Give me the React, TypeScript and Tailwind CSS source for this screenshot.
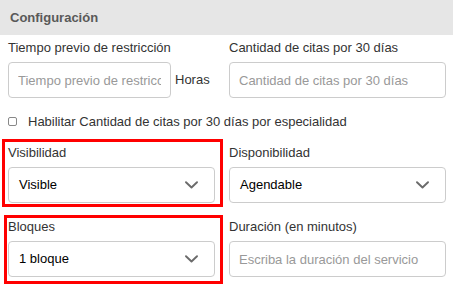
function Field({label, children}: {label: string; children: React.ReactNode}) {
    return (
        <div className="flex flex-col">
            <label className="h-[27px] pt-[5px] text-[13px] leading-[16px] text-[#333]">{label}</label>
            {children}
        </div>
    );
}

function Chevron() {
    return (
        <svg width="13" height="8" viewBox="0 0 13 8" fill="none">
            <path d="M1 1.2 6.5 6.5 12 1.2" stroke="#6b6b6b" strokeWidth="1.9" strokeLinecap="round" strokeLinejoin="round" />
        </svg>
    );
}

function Select({value}: {value: string}) {
    return (
        <div className="flex h-[36px] items-center justify-between rounded-[4px] border border-[#ccc] bg-white pl-[10px] pr-[16px]">
            <span className="text-[13px] text-black">{value}</span>
            <Chevron />
        </div>
    );
}

function Input({placeholder, className = ''}: {placeholder: string; className?: string}) {
    return (
        <input
            placeholder={placeholder}
            className={`h-[36px] rounded-[4px] border border-[#ccc] bg-white px-[9px] text-[13px] text-black outline-none placeholder:text-[#999] ${className}`}
        />
    );
}

export default function App() {
    return (
        <div className="relative h-[288px] w-[453px] overflow-hidden bg-white font-['Liberation_Sans',Arial,sans-serif]">
            <div className="flex h-[35px] items-center bg-[#e6e6e6] px-[10px]">
                <span className="text-[13px] font-semibold text-[#595959]">Configuración</span>
            </div>

            <div className="grid grid-cols-[222px_1fr]">
                <div className="pl-[8px] pr-[7px]">
                    <Field label="Tiempo previo de restricción">
                        <div className="flex items-center">
                            <Input placeholder="Tiempo previo de restricción" className="w-[163px]" />
                            <span className="ml-[4px] text-[13px] text-[#333]">Horas</span>
                        </div>
                    </Field>
                </div>
                <div className="px-[7px]">
                    <Field label="Cantidad de citas por 30 días">
                        <Input placeholder="Cantidad de citas por 30 días" className="w-full" />
                    </Field>
                </div>
            </div>

            <div className="flex h-[42px] items-center pl-[8px] pt-[5px]">
                <span className="h-[9px] w-[9px] rounded-[2px] border border-[#888] bg-white" />
                <span className="ml-[11px] text-[13px] text-[#333]">
                    Habilitar Cantidad de citas por 30 días por especialidad
                </span>
            </div>

            <div className="grid grid-cols-[222px_1fr]">
                <div className="pl-[8px] pr-[7px]">
                    <Field label="Visibilidad">
                        <Select value="Visible" />
                    </Field>
                </div>
                <div className="px-[7px]">
                    <Field label="Disponibilidad">
                        <Select value="Agendable" />
                    </Field>
                </div>
            </div>

            <div className="mt-[11px] grid grid-cols-[222px_1fr]">
                <div className="pl-[8px] pr-[7px]">
                    <Field label="Bloques">
                        <Select value="1 bloque" />
                    </Field>
                </div>
                <div className="px-[7px]">
                    <Field label="Duración (en minutos)">
                        <Input placeholder="Escriba la duración del servicio" className="w-full" />
                    </Field>
                </div>
            </div>

            <div className="pointer-events-none absolute left-[2px] top-[139px] h-[68px] w-[221px] border-[3px] border-[#ff0000]" />
            <div className="pointer-events-none absolute left-[4px] top-[215px] h-[69px] w-[219px] border-[3px] border-[#ff0000]" />
        </div>
    );
}
